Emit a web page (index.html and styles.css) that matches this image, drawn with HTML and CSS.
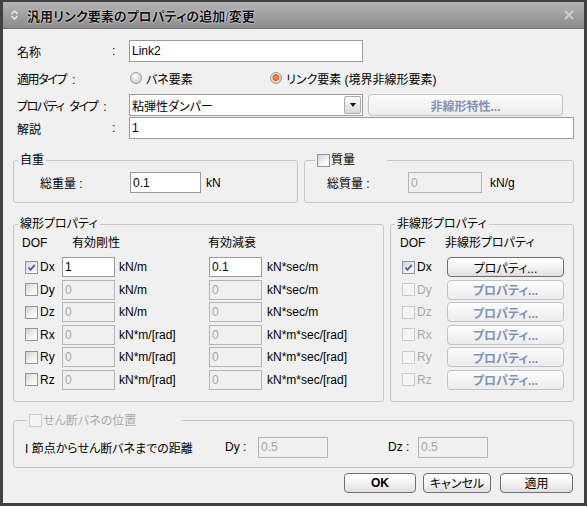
FILE: index.html
```html
<!DOCTYPE html>
<html lang="ja">
<head>
    <meta charset="UTF-8">
    <title>汎用リンク要素のプロパティの追加/変更</title>
    <link rel="stylesheet" href="styles.css">
</head>
<body>
    <div class="window">
        <!-- title bar -->
        <div class="titlebar">
            <svg class="title-icon" width="9" height="12" viewBox="0 0 9 12">
                <path d="M1.5 5 L4.5 2 L7.5 5" fill="none" stroke="#e4e4e4" stroke-width="1.6"/>
                <path d="M1.5 7 L4.5 10 L7.5 7" fill="none" stroke="#e4e4e4" stroke-width="1.6"/>
            </svg>
            <span class="title">汎用リンク要素のプロパティの追加<span class="slash">/</span>変更</span>
            <svg class="close-icon" width="12" height="12" viewBox="0 0 12 12">
                <path d="M2 2 L10 10 M10 2 L2 10" stroke="#cfcfcf" stroke-width="2"/>
            </svg>
        </div>

        <div class="content">
            <div class="form-row">
                <span class="field-label">名称</span><span class="colon">:</span>
                <input class="text-input name-input" type="text" value="Link2">
            </div>

            <div class="form-row">
                <span class="field-label wide">適用タイプ :</span>
                <label class="radio-option first"><span class="radio"></span>バネ要素</label>
                <label class="radio-option"><span class="radio checked"></span>リンク要素 (境界非線形要素)</label>
            </div>

            <div class="form-row">
                <span class="field-label wide">プロパティ タイプ :</span>
                <div class="select">粘弾性ダンパー<span class="select-arrow"><span class="triangle"></span></span></div>
                <button class="btn off nl-char-btn">非線形特性...</button>
            </div>

            <div class="form-row tight">
                <span class="field-label">解説</span><span class="colon">:</span>
                <input class="text-input desc-input" type="text" value="1">
            </div>

            <div class="group-row">
                <fieldset class="group weight-group">
                    <legend>自重</legend>
                    <div class="group-line">
                        <span class="inner-label weight-label">総重量 :</span>
                        <input class="text-input short-input" type="text" value="0.1">
                        <span class="unit">kN</span>
                    </div>
                </fieldset>
                <fieldset class="group mass-group">
                    <legend class="check-legend mass-legend"><span class="check"></span>質量</legend>
                    <div class="group-line">
                        <span class="inner-label mass-label">総質量 :</span>
                        <input class="text-input short-input mass-input" type="text" value="0" disabled>
                        <span class="unit mass-unit">kN/g</span>
                    </div>
                </fieldset>
            </div>

            <div class="group-row">
                <fieldset class="group linear-group">
                    <legend>線形プロパティ</legend>
                    <div class="dof-header">
                        <span class="hd-dof">DOF</span>
                        <span class="hd-stiff">有効剛性</span>
                        <span>有効減衰</span>
                    </div>
                    <div class="dof-rows">
                        <div class="dof-row">
                            <span class="check checked"></span><span class="dof-name">Dx</span>
                            <input class="text-input dof-input" type="text" value="1">
                            <span class="dof-unit">kN/m</span>
                            <input class="text-input dof-input" type="text" value="0.1">
                            <span class="dof-unit2">kN*sec/m</span>
                        </div>
                        <div class="dof-row">
                            <span class="check"></span><span class="dof-name">Dy</span>
                            <input class="text-input dof-input" type="text" value="0" disabled>
                            <span class="dof-unit">kN/m</span>
                            <input class="text-input dof-input" type="text" value="0" disabled>
                            <span class="dof-unit2">kN*sec/m</span>
                        </div>
                        <div class="dof-row">
                            <span class="check"></span><span class="dof-name">Dz</span>
                            <input class="text-input dof-input" type="text" value="0" disabled>
                            <span class="dof-unit">kN/m</span>
                            <input class="text-input dof-input" type="text" value="0" disabled>
                            <span class="dof-unit2">kN*sec/m</span>
                        </div>
                        <div class="dof-row">
                            <span class="check"></span><span class="dof-name">Rx</span>
                            <input class="text-input dof-input" type="text" value="0" disabled>
                            <span class="dof-unit">kN*m/[rad]</span>
                            <input class="text-input dof-input" type="text" value="0" disabled>
                            <span class="dof-unit2">kN*m*sec/[rad]</span>
                        </div>
                        <div class="dof-row">
                            <span class="check"></span><span class="dof-name">Ry</span>
                            <input class="text-input dof-input" type="text" value="0" disabled>
                            <span class="dof-unit">kN*m/[rad]</span>
                            <input class="text-input dof-input" type="text" value="0" disabled>
                            <span class="dof-unit2">kN*m*sec/[rad]</span>
                        </div>
                        <div class="dof-row">
                            <span class="check"></span><span class="dof-name">Rz</span>
                            <input class="text-input dof-input" type="text" value="0" disabled>
                            <span class="dof-unit">kN*m/[rad]</span>
                            <input class="text-input dof-input" type="text" value="0" disabled>
                            <span class="dof-unit2">kN*m*sec/[rad]</span>
                        </div>
                    </div>
                </fieldset>

                <fieldset class="group nonlinear-group">
                    <legend>非線形プロパティ</legend>
                    <div class="dof-header nl-header">
                        <span class="hd-dof">DOF</span>
                        <span>非線形プロパティ</span>
                    </div>
                    <div class="dof-rows">
                        <div class="dof-row">
                            <span class="check checked"></span><span class="nl-name">Dx</span>
                            <button class="btn nl-btn">プロパティ...</button>
                        </div>
                        <div class="dof-row">
                            <span class="check off"></span><span class="nl-name off-text">Dy</span>
                            <button class="btn off nl-btn">プロパティ...</button>
                        </div>
                        <div class="dof-row">
                            <span class="check off"></span><span class="nl-name off-text">Dz</span>
                            <button class="btn off nl-btn">プロパティ...</button>
                        </div>
                        <div class="dof-row">
                            <span class="check off"></span><span class="nl-name off-text">Rx</span>
                            <button class="btn off nl-btn">プロパティ...</button>
                        </div>
                        <div class="dof-row">
                            <span class="check off"></span><span class="nl-name off-text">Ry</span>
                            <button class="btn off nl-btn">プロパティ...</button>
                        </div>
                        <div class="dof-row">
                            <span class="check off"></span><span class="nl-name off-text">Rz</span>
                            <button class="btn off nl-btn">プロパティ...</button>
                        </div>
                    </div>
                </fieldset>
            </div>

            <fieldset class="group shear-group">
                <legend class="check-legend shear-legend"><span class="check off"></span><span class="off-text">せん断バネの位置</span></legend>
                <div class="group-line shear-line">
                    <span class="shear-text">I 節点からせん断バネまでの距離</span>
                    <span class="shear-dy">Dy :</span>
                    <input class="text-input shear-input" type="text" value="0.5" disabled>
                    <span class="shear-dz">Dz :</span>
                    <input class="text-input shear-input" type="text" value="0.5" disabled>
                </div>
            </fieldset>

            <div class="dialog-buttons">
                <button class="btn ok-btn">OK</button>
                <button class="btn cancel-btn">キャンセル</button>
                <button class="btn apply-btn">適用</button>
            </div>
        </div>
    </div>
</body>
</html>
```

FILE: styles.css
```css
* {
    box-sizing: border-box;
    margin: 0;
    padding: 0;
}

body {
    font-family: "Liberation Sans", "Noto Sans CJK JP", sans-serif;
    font-size: 12px;
    font-feature-settings: "palt";
    color: #000;
    background: #fff;
}

.window {
    width: 587px;
    height: 506px;
    border: 3px solid #414141;
    border-top-width: 2px;
    background: #f0f0f0;
}

/* title bar */
.titlebar {
    height: 27px;
    display: flex;
    align-items: center;
    padding: 0 9px 0 7px;
    background: linear-gradient(#b4b4b4, #8c8c8c);
    border-bottom: 1px solid #707070;
}

.title {
    margin-left: 8px;
    font-size: 13px;
    font-weight: bold;
    color: #111;
    text-shadow: 0 0 2px #f2f2f2, 0 0 1px #fff;
}

.title .slash {
    color: #3d63a8;
}

.close-icon {
    margin-left: auto;
}

.content {
    padding: 11px 10px 0 10px;
}

/* top form rows */
.form-row {
    display: flex;
    align-items: center;
    height: 22px;
    margin-bottom: 5px;
}

.form-row.tight {
    margin-top: -4px;
}

.field-label {
    margin-left: 4px;
    width: 95px;
    white-space: nowrap;
}

.field-label.wide {
    width: 112px;
    letter-spacing: -1.4px;
    word-spacing: 4px;
}

.colon {
    width: 17px;
}

.text-input {
    font: inherit;
    font-feature-settings: "palt";
    height: 22px;
    padding: 0 2px;
    border: 1px solid #9a9a9a;
    background: #fff;
    color: #000;
    outline: none;
}

.text-input:disabled {
    background: #f0f0f0;
    border-color: #b4b4b4;
    color: #a6a6a6;
}

.name-input {
    width: 234px;
}

.desc-input {
    flex: 1;
}

.radio-option {
    display: flex;
    align-items: center;
    white-space: nowrap;
}

.radio-option.first {
    margin-left: 1px;
    width: 140px;
}

.radio {
    width: 12px;
    height: 12px;
    margin-right: 4px;
    border: 1px solid #9c9c9c;
    border-radius: 50%;
    background: radial-gradient(circle at 40% 35%, #ffffff 0, #e0e0e0 45%, #b8b8b8 100%);
}

.radio.checked {
    background:
        radial-gradient(circle at 48% 45%, #ffb27c 0, #f26a2c 2.2px, #d9501d 3px, rgba(0,0,0,0) 3.6px),
        radial-gradient(circle at 40% 35%, #ffffff 0, #e0e0e0 45%, #b8b8b8 100%);
}

.select {
    display: flex;
    align-items: center;
    width: 234px;
    height: 22px;
    padding-left: 2px;
    border: 1px solid #9a9a9a;
    background: #fff;
}

.select-arrow {
    display: flex;
    align-items: center;
    justify-content: center;
    margin-left: auto;
    margin-right: 1px;
    width: 17px;
    height: 18px;
    border: 1px solid #a9a9a9;
    border-radius: 2px;
    background: linear-gradient(#fbfbfb, #dadada);
}

.triangle {
    width: 0;
    height: 0;
    border-left: 3.5px solid transparent;
    border-right: 3.5px solid transparent;
    border-top: 4px solid #111;
}

/* buttons */
.btn {
    font: inherit;
    font-feature-settings: "palt";
    height: 20px;
    border: 1px solid #6f6f6f;
    border-radius: 4px;
    background: linear-gradient(#ffffff 0%, #f4f4f4 50%, #dedede 100%);
    color: #000;
}

.btn.off {
    border-color: #c2c2c2;
    background: linear-gradient(#fcfcfc, #ececec);
    color: #8392b6;
    font-weight: bold;
}

.nl-char-btn {
    margin-left: 5px;
    width: 195px;
    height: 22px;
}

/* group boxes */
.group {
    border: 1px solid #c6c6c6;
    border-radius: 3px;
    min-width: 0;
}

.group legend {
    margin-left: 4px;
    padding: 0 2px;
    line-height: 16px;
}

.check-legend {
    display: flex;
    align-items: center;
}

.check-legend .check {
    margin-right: 1px;
}

.mass-legend {
    margin-left: 10px !important;
    padding-right: 32px !important;
}

.shear-legend {
    margin-left: 13px !important;
    padding-right: 46px !important;
}

.group-row {
    display: flex;
    gap: 6px;
    margin-top: 13px;
}

.weight-group {
    width: 285px;
    padding-bottom: 9px;
}

.mass-group {
    width: 270px;
    padding-bottom: 9px;
}

.group-line {
    display: flex;
    align-items: center;
    height: 21px;
    margin-top: 4px;
}

.inner-label {
    white-space: nowrap;
}

.weight-label {
    margin-left: 26px;
    width: 90px;
}

.mass-label {
    margin-left: 22px;
    width: 81px;
}

.short-input {
    width: 71px;
    height: 21px;
}

.mass-input {
    width: 74px;
}

.unit {
    margin-left: 5px;
}

.mass-unit {
    margin-left: 8px;
}

/* checkboxes */
.check {
    flex: none;
    width: 13px;
    height: 13px;
    border: 1px solid #8d95a3;
    background: linear-gradient(135deg, #d2d2d2, #f4f4f4 60%, #ffffff);
}

.check.checked {
    background:
        url("data:image/svg+xml,%3Csvg xmlns='http://www.w3.org/2000/svg' width='11' height='11'%3E%3Cpath d='M2.5 5.5 L4.5 7.8 L8.8 2.8' fill='none' stroke='%234b5ca6' stroke-width='1.8'/%3E%3C/svg%3E") center no-repeat,
        linear-gradient(135deg, #d2d2d2, #f4f4f4 60%, #ffffff);
}

.check.off {
    border-color: #cacaca;
    background: #f5f5f5;
}

.off-text {
    color: #a9a9a9;
}

/* DOF tables */
.linear-group {
    width: 371px;
    padding-bottom: 11px;
}

.nonlinear-group {
    width: 184px;
    padding-bottom: 11px;
}

.dof-header {
    display: flex;
    margin-top: 3px;
    line-height: 16px;
}

.hd-dof {
    margin-left: 8px;
    width: 50px;
}

.hd-stiff {
    width: 136px;
}

.nl-header .hd-dof {
    margin-left: 9px;
    width: 45px;
}

.dof-rows {
    display: flex;
    flex-direction: column;
    gap: 2.6px;
    margin-top: 6px;
}

.dof-row {
    display: flex;
    align-items: center;
    height: 20px;
}

.dof-row .check {
    margin-left: 11px;
}

.dof-name {
    margin-left: 2px;
    width: 22px;
}

.dof-input {
    width: 53px;
    height: 20px;
}

.dof-unit {
    width: 94px;
    padding-left: 4px;
    white-space: nowrap;
}

.dof-unit2 {
    padding-left: 5px;
    white-space: nowrap;
}

.nl-name {
    margin-left: 2px;
    width: 30px;
}

.nl-btn {
    width: 117px;
}

/* shear spring */
.shear-group {
    margin-top: 11px;
    padding-bottom: 9px;
}

.shear-line {
    margin-top: 8px;
}

.shear-text {
    margin-left: 11px;
    width: 200px;
    white-space: nowrap;
}

.shear-dy {
    width: 33px;
}

.shear-input {
    width: 70px;
    height: 21px;
}

.shear-dz {
    margin-left: 60px;
    width: 30px;
}

/* dialog buttons */
.dialog-buttons {
    display: flex;
    justify-content: flex-end;
    margin-top: 5px;
    padding-right: 1px;
}

.ok-btn {
    width: 72px;
    font-weight: bold;
}

.cancel-btn {
    margin-left: 7px;
    width: 68px;
}

.apply-btn {
    margin-left: 9px;
    width: 73px;
}
```
